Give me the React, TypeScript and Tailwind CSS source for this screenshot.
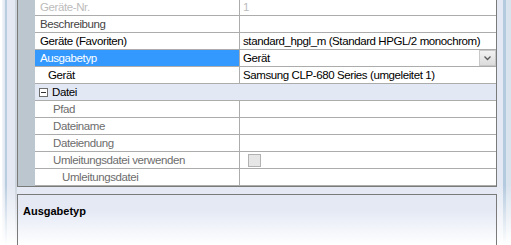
const font = { fontFamily: '"Liberation Sans", Arial, sans-serif' };

type Row = {
  label: string;
  value?: string;
  indent: number;
  tone?: 'disabled' | 'muted' | 'gray' | 'normal';
  selected?: boolean;
  dropdown?: boolean;
  checkbox?: boolean;
};

const rows: Row[] = [
  { label: 'Geräte-Nr.', value: '1', indent: 5, tone: 'disabled' },
  { label: 'Beschreibung', value: '', indent: 5, tone: 'muted' },
  { label: 'Geräte (Favoriten)', value: 'standard_hpgl_m (Standard HPGL/2 monochrom)', indent: 5 },
  { label: 'Ausgabetyp', value: 'Gerät', indent: 5, selected: true, dropdown: true },
  { label: 'Gerät', value: 'Samsung CLP-680 Series (umgeleitet 1)', indent: 13 },
];

const fileRows: Row[] = [
  { label: 'Pfad', indent: 18, tone: 'gray' },
  { label: 'Dateiname', indent: 18, tone: 'gray' },
  { label: 'Dateiendung', indent: 18, tone: 'gray' },
  { label: 'Umleitungsdatei verwenden', indent: 18, tone: 'gray', checkbox: true },
  { label: 'Umleitungsdatei', indent: 27, tone: 'gray' },
];

const toneClass = {
  disabled: 'text-[#bcbcbc]',
  muted: 'text-[#444444]',
  gray: 'text-[#6d6d6d]',
  normal: 'text-black',
};

function PropRow({ row }: { row: Row }) {
  const tone = toneClass[row.tone ?? 'normal'];
  return (
    <div className="flex h-[17px]">
      <div className="w-[17px] shrink-0 bg-[#bcc6cf]" />
      <div
        className={`w-[205px] shrink-0 h-[17px] flex items-center border-b border-r border-[#acacac] ${
          row.selected ? 'bg-[#3399ff] text-white' : `bg-white ${tone}`
        }`}
        style={{ paddingLeft: row.indent }}
      >
        <span className="leading-none pt-[2px]">{row.label}</span>
      </div>
      <div className="flex-1 h-[17px] flex items-center bg-white border-b border-[#acacac] relative">
        <span className={`pl-[3px] pt-[2px] leading-none ${row.tone === 'disabled' ? 'text-[#bcbcbc]' : 'text-black'}`}>
          {row.value}
        </span>
        {row.checkbox && (
          <div className="ml-[5px] w-[13px] h-[13px] border border-[#b2b2b2] bg-[#e6e6e6]" />
        )}
        {row.dropdown && (
          <div className="absolute right-0 top-0 w-[17px] h-[16px] border border-[#c8c8c8] bg-gradient-to-b from-[#f2f2f2] to-[#dcdcdc] flex items-center justify-center">
            <svg width="7" height="5" viewBox="0 0 7 5">
              <path d="M0.5 0.5 L3.5 3.5 L6.5 0.5" fill="none" stroke="#5a5a5a" strokeWidth="1.3" />
            </svg>
          </div>
        )}
      </div>
    </div>
  );
}

export default function App() {
  return (
    <div
      className="w-[511px] h-[245px] overflow-hidden flex bg-gradient-to-b from-[#e4e9f4] from-80% to-white text-[11.5px] tracking-[-0.4px]"
      style={font}
    >
      {/* left strip */}
      <div className="w-[17px] shrink-0 flex relative">
        <div className="w-[2px] bg-white" />
        <div className="w-[3px] bg-gradient-to-r from-[#f4f6fa] to-[#dfe6f0]" />
        <div className="w-[2px] bg-[#b9cde0]" />
        <div className="w-[8px] bg-[#e3e8f2]" />
        <div className="w-[2px] bg-[#cdd4dd]" />
        <div className="absolute inset-x-0 bottom-0 h-[60px] bg-gradient-to-b from-transparent to-white" />
      </div>

      {/* main column */}
      <div className="w-[480px] shrink-0 flex flex-col">
        <div className="mt-[-1px] border-l border-r border-b border-[#7a7a7a] bg-[#bcc6cf]">
          {rows.map((r) => (
            <PropRow key={r.label} row={r} />
          ))}
          <div className="flex h-[17px]">
            <div className="w-[17px] shrink-0 bg-[#bcc6cf]" />
            <div className="flex-1 flex items-center bg-[#e3e9f4] border-b border-[#acacac] pl-[4px]">
              <div className="w-[9px] h-[9px] border border-[#6e6e6e] bg-white flex items-center justify-center">
                <div className="w-[5px] h-px bg-[#333]" />
              </div>
              <span className="ml-[4px] pt-[2px] leading-none text-black">Datei</span>
            </div>
          </div>
          {fileRows.map((r) => (
            <PropRow key={r.label} row={r} />
          ))}
        </div>

        <div className="mt-[7px] flex-1 border-l border-r border-t border-[#7a7a7a] bg-gradient-to-b from-[#e4e9f4] from-30% to-white px-[5px] pt-[8px]">
          <span className="font-bold text-black leading-none text-[11px] tracking-normal">Ausgabetyp</span>
        </div>
      </div>

      {/* right strip */}
      <div className="flex-1 flex relative">
        <div className="w-[6px] bg-[#e4e9f3]" />
        <div className="w-[3px] bg-[#b4cadf]" />
        <div className="flex-1 bg-[#d9e3ee]" />
        <div className="absolute inset-x-0 bottom-0 h-[60px] bg-gradient-to-b from-transparent to-white" />
      </div>
    </div>
  );
}
